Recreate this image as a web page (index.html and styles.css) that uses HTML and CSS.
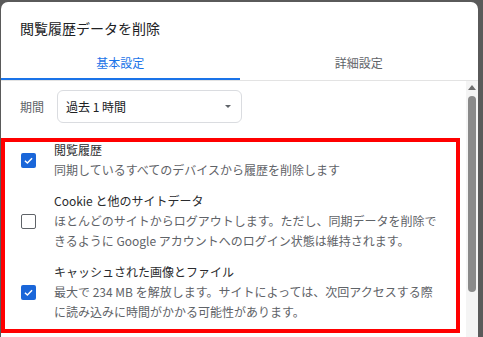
FILE: index.html
```html
<!DOCTYPE html>
<html lang="ja">
<head>
<meta charset="utf-8">
<link rel="stylesheet" href="styles.css">
</head>
<body>
<div class="dialog">
  <div class="title">閲覧履歴データを削除</div>
  <div class="tabs">
    <div class="tab active">基本設定</div>
    <div class="tab">詳細設定</div>
  </div>
  <div class="body">
    <div class="content">
      <div class="period">
        <span class="period-label">期間</span>
        <div class="select">
          <span>過去 1 時間</span>
          <span class="caret"></span>
        </div>
      </div>
      <div class="items">
        <div class="item">
          <div class="check-col"><span class="cb checked"><svg viewBox="0 0 16 16" width="15" height="15"><path d="M4.2 8.2 L6.8 10.6 L11.8 5.6" fill="none" stroke="#fff" stroke-width="1.6"/></svg></span></div>
          <div class="text">
            <div class="item-title">閲覧履歴</div>
            <div class="item-sub">同期しているすべてのデバイスから履歴を削除します</div>
          </div>
        </div>
        <div class="item">
          <div class="check-col"><span class="cb"></span></div>
          <div class="text">
            <div class="item-title">Cookie と他のサイトデータ</div>
            <div class="item-sub">ほとんどのサイトからログアウトします。ただし、同期データを削除できるように Google アカウントへのログイン状態は維持されます。</div>
          </div>
        </div>
        <div class="item">
          <div class="check-col"><span class="cb checked"><svg viewBox="0 0 16 16" width="15" height="15"><path d="M4.2 8.2 L6.8 10.6 L11.8 5.6" fill="none" stroke="#fff" stroke-width="1.6"/></svg></span></div>
          <div class="text">
            <div class="item-title">キャッシュされた画像とファイル</div>
            <div class="item-sub">最大で 234 MB を解放します。サイトによっては、次回アクセスする際に読み込みに時間がかかる可能性があります。</div>
          </div>
        </div>
      </div>
    </div>
    <div class="scrollbar">
      <span class="arrow-up"></span>
      <span class="thumb"></span>
    </div>
  </div>
  <div class="highlight"></div>
</div>
</body>
</html>
```
FILE: styles.css
```css
* { box-sizing: border-box; }
html, body { margin: 0; padding: 0; }
body {
  background: #5a5a5a;
  font-family: "Noto Sans CJK JP", "Noto Sans", sans-serif;
  width: 483px;
  height: 337px;
  overflow: hidden;
}
.dialog {
  position: relative;
  margin: 2px 5px 0 1px;
  width: 477px;
  height: 335px;
  background: #fff;
  border-radius: 7px 7px 0 0;
  overflow: hidden;
  display: flex;
  flex-direction: column;
}
.title {
  padding: 16px 0 6px 19px;
  font-size: 14px;
  line-height: 20px;
  color: #202124;
}
.tabs {
  display: flex;
  border-bottom: 1px solid #e3e3e3;
}
.tab {
  flex: 1;
  height: 36px;
  display: flex;
  align-items: center;
  justify-content: center;
  font-size: 12px;
  color: #5f6368;
}
.tab.active {
  color: #1a73e8;
  box-shadow: inset 0 -2px 0 #1a73e8;
}
.body {
  flex: 1;
  display: flex;
  min-height: 0;
}
.content {
  flex: 1;
  padding: 9px 0 0 19px;
}
.period {
  display: flex;
  align-items: center;
}
.period-label {
  font-size: 12px;
  color: #5f6368;
  width: 37px;
}
.select {
  width: 185px;
  height: 33px;
  border: 1px solid #dadce0;
  border-radius: 6px;
  display: flex;
  align-items: center;
  justify-content: space-between;
  padding: 0 10px 0 8px;
  font-size: 12px;
  color: #202124;
}
.caret {
  width: 0;
  height: 0;
  border-left: 3.5px solid transparent;
  border-right: 3.5px solid transparent;
  border-top: 3.5px solid #5f6368;
}
.items {
  margin-top: 17px;
  display: flex;
  flex-direction: column;
  gap: 11px;
}
.item {
  display: flex;
  align-items: center;
}
.check-col {
  width: 34px;
  flex: none;
  padding-left: 1px;
}
.cb {
  display: block;
  width: 15px;
  height: 15px;
  border: 1.6px solid #5f6368;
  border-radius: 2px;
}
.cb.checked {
  background: #1a66d9;
  border: none;
}
.cb svg { display: block; }
.text {
  width: 386px;
  font-size: 12px;
  line-height: 20px;
}
.item-title { color: #2a2b2e; }
.item-sub { color: #5f6368; }
.scrollbar {
  width: 12px;
  flex: none;
  background: #f4f4f4;
  display: flex;
  flex-direction: column;
  align-items: center;
  padding-top: 4px;
}
.arrow-up {
  width: 0;
  height: 0;
  border-left: 4px solid transparent;
  border-right: 4px solid transparent;
  border-bottom: 5px solid #6e6e6e;
}
.thumb {
  margin-top: 6px;
  width: 8px;
  height: 196px;
  border-radius: 4px;
  background: #8a8a8a;
}
.highlight {
  position: absolute;
  left: 0;
  top: 136px;
  width: 459px;
  height: 195px;
  border: 4px solid #ff0000;
  pointer-events: none;
}
```
